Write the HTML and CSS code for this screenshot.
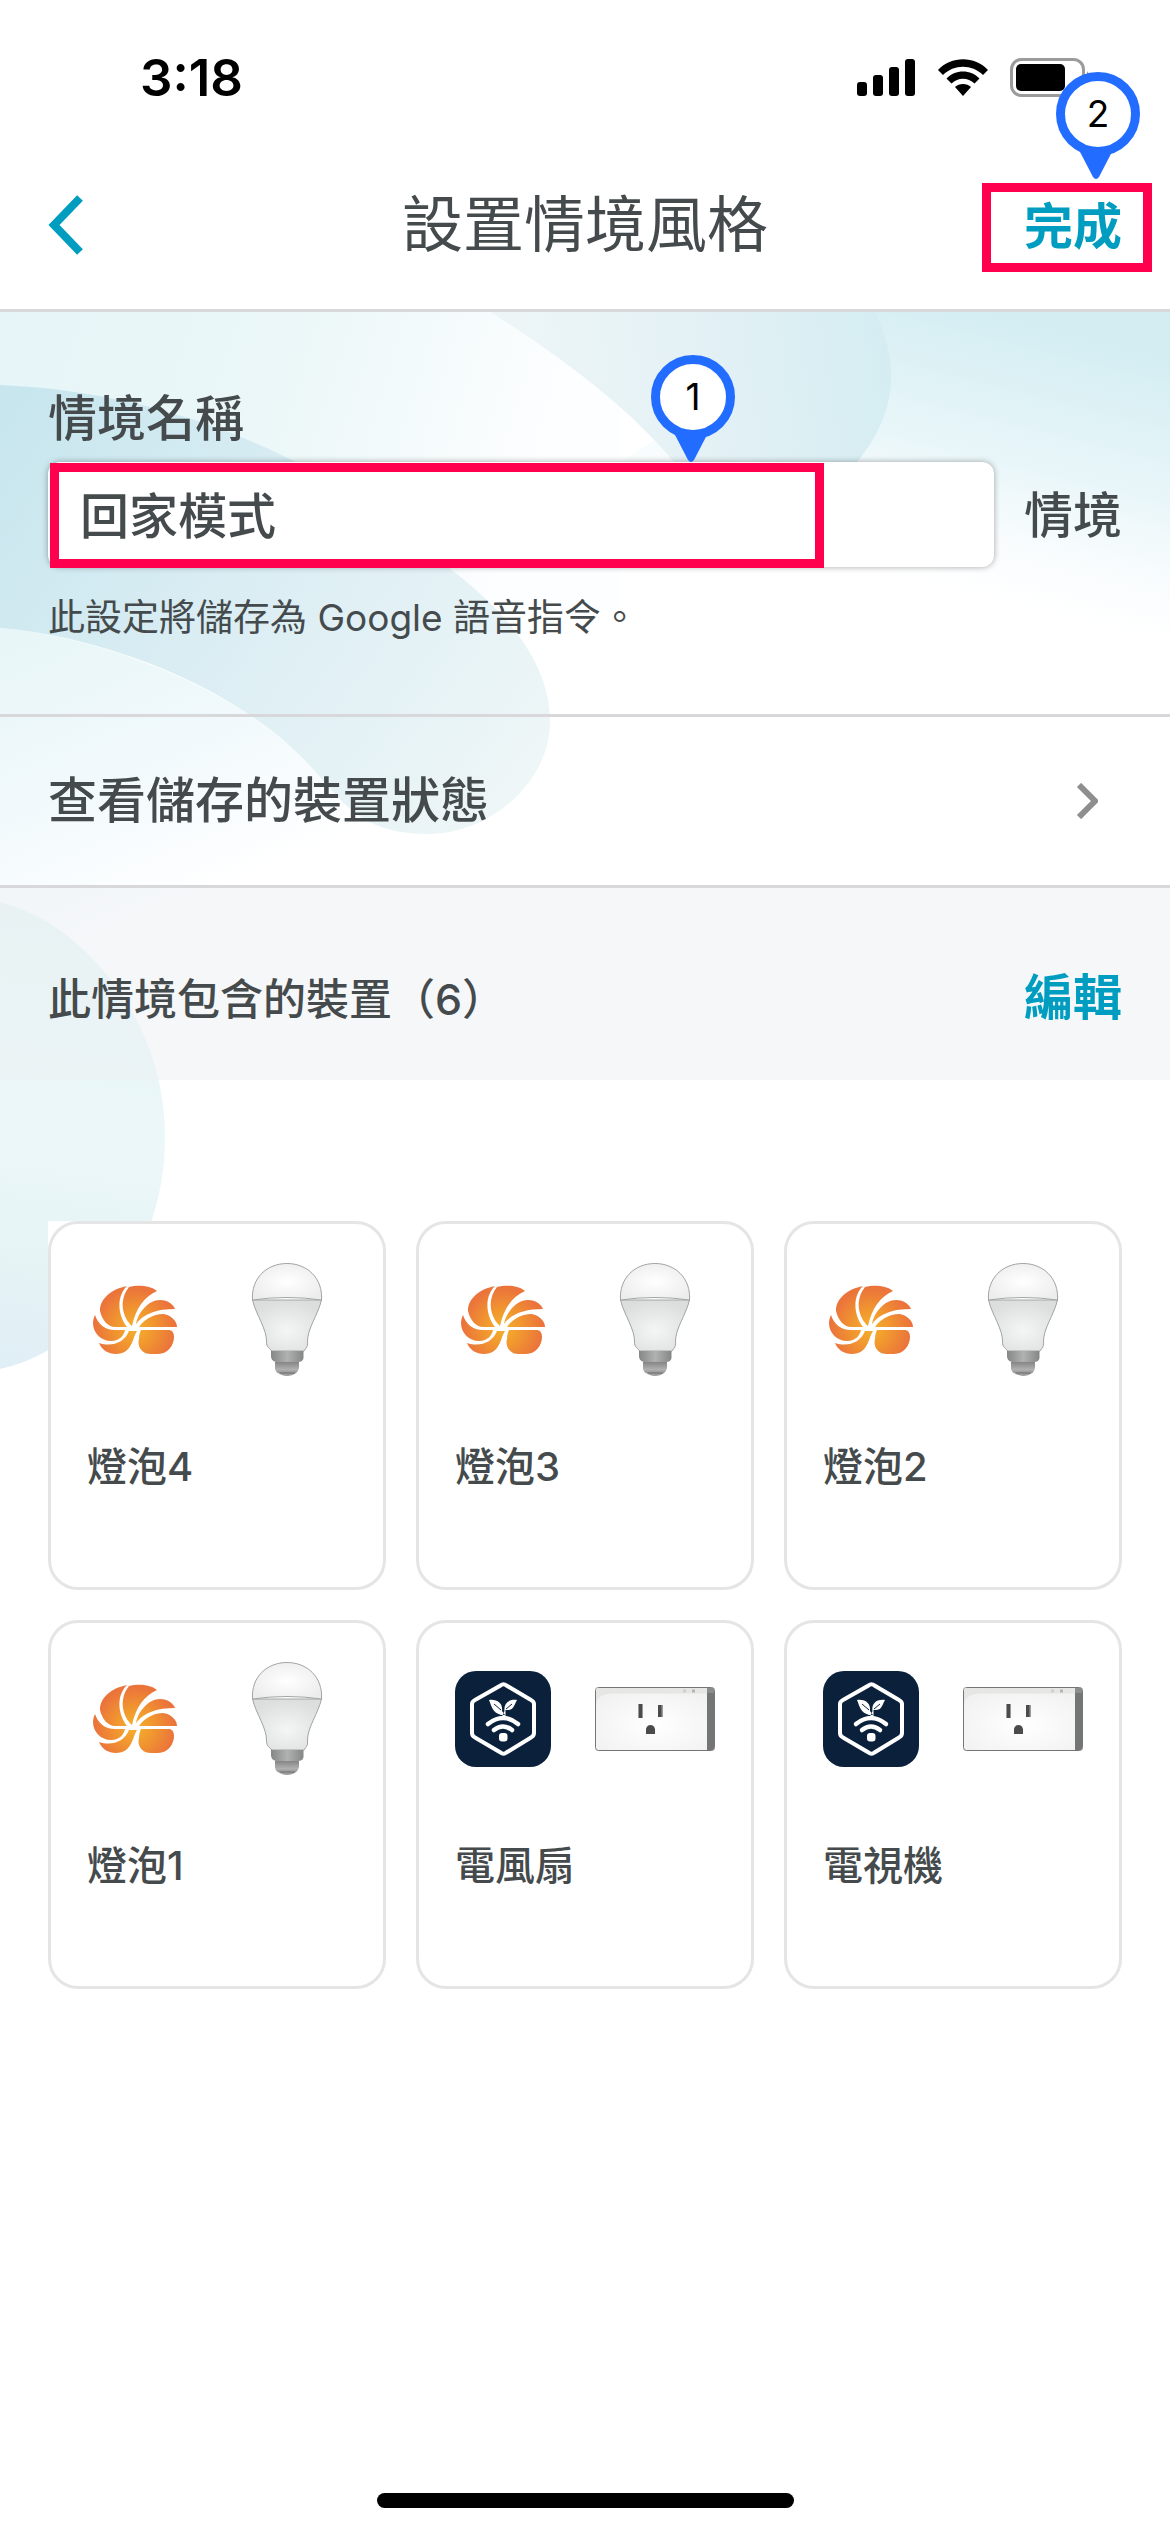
FILE: index.html
```html
<!DOCTYPE html>
<html lang="zh-Hant">
<head>
  <meta charset="UTF-8">
  <meta name="viewport" content="width=device-width, initial-scale=1.0">
  <title>設置情境風格</title>
  <link rel="stylesheet" href="styles.css">
</head>
<body>
  <!-- shared drawings -->
  <svg class="defs" aria-hidden="true">
    <defs>
      <radialGradient id="orange" gradientUnits="userSpaceOnUse" cx="48" cy="56" r="44">
        <stop offset="0" stop-color="#f6b02c"/>
        <stop offset="0.4" stop-color="#f1982f"/>
        <stop offset="0.9" stop-color="#eb743b"/>
      </radialGradient>
      <radialGradient id="dome" cx="0.5" cy="0.5" r="0.6">
        <stop offset="0" stop-color="#ffffff"/>
        <stop offset="1" stop-color="#ececec"/>
      </radialGradient>
      <radialGradient id="glass" cx="0.5" cy="0.6" r="0.6">
        <stop offset="0" stop-color="#f4f6f5"/>
        <stop offset="1" stop-color="#dcdddd"/>
      </radialGradient>
      <linearGradient id="metal">
        <stop offset="0" stop-color="#868686"/>
        <stop offset="0.5" stop-color="#b0b2b1"/>
        <stop offset="1" stop-color="#868686"/>
      </linearGradient>
      <linearGradient id="metal2" x2="0" y2="1">
        <stop offset="0" stop-color="#858585"/>
        <stop offset="0.6" stop-color="#b0b0b0"/>
        <stop offset="1" stop-color="#8c8c8c"/>
      </linearGradient>
      <radialGradient id="plate" cx="0.5" cy="0.6" r="0.6">
        <stop offset="0" stop-color="#ffffff"/>
        <stop offset="1" stop-color="#f2f2f2"/>
      </radialGradient>
    </defs>
    <symbol id="swirl" viewBox="0 0 96 96">
      <g fill="url(#orange)">
        <path d="M40 14C25 17 13 26 13 39C15 48 21 55 28 55H40C32 45 28 26 40 14Z"/>
        <path d="M42 15C50 13 63 13 70 19C57 25 49 36 45 54C36 46 31 29 42 15Z"/>
        <path d="M49 52C51 41 61 28 73 28C81 28 87 33 88 37C71 37 57 41 49 52Z"/>
        <path d="M52 55C58 46 68 42 76 42C84 43 90 49 90 55Z"/>
        <path d="M54 58H82C86 58 87 62 87 65C87 73 81 82 71 82H63C54 82 50 73 52 67C52 63 53 60 54 58Z"/>
        <path d="M8 43C11 52 18 58 28 58H38C37 63 33 69 24 69C14 69 6 61 6 51C6 48 7 45 8 43Z"/>
        <path d="M12 71C25 75 37 71 42 59H50C45 67 45 82 29 82C21 82 15 78 12 71Z"/>
      </g>
    </symbol>
    <symbol id="bulb" viewBox="0 0 120 120">
      <path d="M25.5 40C29 55 40 69 39.5 82C39.5 87 42 88 45 91H77C79 88 81 87 80.5 82C80 69 91 55 94.5 40Z" fill="url(#glass)" stroke="#a2a4a3"/>
      <path d="M25.5 40C24 18 40 3.5 60 3.5S96 18 94.5 40Q60 35 25.5 40Z" fill="url(#dome)" stroke="#a2a4a3"/>
      <path d="M44 91H76.5V98Q76 102 71 102H49Q44 101 44 96Z" fill="url(#metal)"/>
      <path d="M48 102H72V108Q71 113 66 114.5H54Q49 113 48 109Z" fill="url(#metal2)"/>
      <path d="M52 112.5H69Q65 116 60 116Q55 116 52 112.5Z" fill="#9b9e9c"/>
      <path d="M53 113H68" stroke="#6d706f"/>
    </symbol>
    <symbol id="sprout" viewBox="0 0 96 96">
      <rect width="96" height="96" rx="21" fill="#0b203b"/>
      <path d="M45.5 14.5Q48.5 12 51.5 14.5L76 29Q79 30.5 79 33V62Q79 65 76 66.5L51.5 81.5Q48.5 84 45.5 81.5L20 66.5Q17 65 17 62V33Q17 30.5 20 29Z" fill="none" stroke="#fff" stroke-width="4"/>
      <path d="M34 29C43 28 48 33 47 40L50 44H46C37 41 37 36 34 29ZM62 29C53 28 48.5 33 49.5 40L47 46H50.5V39C59 40 59 34 62 29Z" fill="#fff"/>
      <path d="M39 33L46 39M57 33L51 38" stroke="#0b203b"/>
      <path d="M33 53Q48 41 63 53M39 59Q48 52 57 59" fill="none" stroke="#fff" stroke-width="4.5" stroke-linecap="round"/>
      <rect x="44" y="62" width="8.5" height="8.5" rx="3" fill="#fff"/>
    </symbol>
    <symbol id="plug" viewBox="0 0 120 120">
      <rect x="0.5" y="28.5" width="119" height="63" rx="3" fill="url(#plate)" stroke="#747676"/>
      <path d="M1 46V31Q1 29 3 29H112V34.5H20Q2 34 1 46Z" fill="#e6e6e5"/>
      <path d="M112 29H117Q119 29 119 32V89Q119 91 117 91H112Z" fill="#747676"/>
      <path d="M112 29H117Q119 29 119 34H112Z" fill="#8b8d8d"/>
      <path d="M88 30.5H91V33.5H88Z" fill="#cfcfcf"/>
      <path d="M97 30.5H100V33.5H97Z" fill="#b5b5b5"/>
      <path d="M43 45H48V59H43ZM63 46H68V58H63Z" fill="#9a9a9a"/>
      <path d="M44 45H47V59H44ZM63 46H66.5V58H63ZM51 75V70Q52 66 55.5 66T60 70V75Z" fill="#4b4b4b"/>
    </symbol>
  </svg>

  <div class="page">
    <header class="header">
      <div class="status">
        <span class="time">3:18</span>
        <div class="status-icons">
          <svg width="60" height="40" viewBox="0 0 60 40">
            <rect x="1" y="24" width="10" height="14" rx="3"/>
            <rect x="17" y="17" width="10" height="21" rx="3"/>
            <rect x="33" y="9" width="10" height="29" rx="3"/>
            <rect x="49" y="1" width="10" height="37" rx="3"/>
          </svg>
          <svg width="52" height="40" viewBox="0 0 52 40">
            <path d="M1 12C14 -2.5 38 -2.5 51 12L46 17C35 6 17 6 6 17ZM9.5 20.5C18 11 34 11 42.5 20.5L37.5 25.5C31 19 21 19 14.5 25.5ZM18 29C22 25 30 25 34 29L26 38Z"/>
          </svg>
          <svg width="80" height="40" viewBox="0 0 80 40">
            <rect x="1.5" y="1.5" width="72" height="36" rx="10" fill="none" stroke="#9b9b9b" stroke-width="3"/>
            <rect x="6" y="6" width="49" height="27" rx="5"/>
            <path d="M77 13Q80 16 80 20T77 27Z" fill="#9b9b9b"/>
          </svg>
        </div>
      </div>
      <nav class="navbar">
        <button class="back" aria-label="返回">
          <svg width="36" height="60" viewBox="0 0 36 60"><path d="M32 3L6 30L32 57" fill="none" stroke="#009dc0" stroke-width="8"/></svg>
        </button>
        <h1 class="title">設置情境風格</h1>
        <div class="done-box">
          <button class="link-btn">完成</button>
          <div class="marker marker-done"></div>
          <div class="pin pin-done">
            <svg width="84" height="108" viewBox="0 0 84 108"><path d="M22 76L37 105Q40 109 43 105L58 76Z" fill="#226dff"/><circle cx="42" cy="42" r="37.5" fill="#fff" stroke="#226dff" stroke-width="9"/></svg>
            <span>2</span>
          </div>
        </div>
      </nav>
    </header>

    <main class="content">
      <svg class="backdrop" viewBox="0 0 1170 1080" preserveAspectRatio="none" aria-hidden="true">
        <defs>
          <linearGradient id="bgLeft" gradientUnits="userSpaceOnUse" x1="0" y1="0" x2="540" y2="170">
            <stop offset="0" stop-color="#e6f5f8"/>
            <stop offset="0.5" stop-color="#ebf7f8"/>
            <stop offset="1" stop-color="#fdfeff"/>
          </linearGradient>
          <linearGradient id="bgRight" gradientUnits="userSpaceOnUse" x1="1080" y1="20" x2="1010" y2="300">
            <stop offset="0" stop-color="#d3edf2"/>
            <stop offset="0.5" stop-color="#e9f6f9"/>
            <stop offset="1" stop-color="#f6fbfd" stop-opacity="0"/>
          </linearGradient>
          <linearGradient id="bgTop" gradientUnits="userSpaceOnUse" x1="500" y1="80" x2="880" y2="20">
            <stop offset="0" stop-color="#eef6f7"/>
            <stop offset="0.5" stop-color="#e4f1f5"/>
            <stop offset="1" stop-color="#d5edf2"/>
          </linearGradient>
          <linearGradient id="bgWave" gradientUnits="userSpaceOnUse" x1="0" y1="120" x2="500" y2="500">
            <stop offset="0" stop-color="#c8e6ee"/>
            <stop offset="0.5" stop-color="#dceef4"/>
            <stop offset="1" stop-color="#eef6f7"/>
          </linearGradient>
          <linearGradient id="bgLow" gradientUnits="userSpaceOnUse" x1="0" y1="330" x2="120" y2="620">
            <stop offset="0" stop-color="#e8f6f7"/>
            <stop offset="0.5" stop-color="#f1f9fc"/>
            <stop offset="1" stop-color="#ffffff"/>
          </linearGradient>
          <linearGradient id="bgDisc" gradientUnits="userSpaceOnUse" x1="100" y1="590" x2="30" y2="1057">
            <stop offset="0" stop-color="#e4f5f3"/>
            <stop offset="0.5" stop-color="#ecf7f9"/>
            <stop offset="0.75" stop-color="#e6f4f5"/>
            <stop offset="1" stop-color="#e0eef6"/>
          </linearGradient>
        </defs>
        <path d="M0 0H620V300H0Z" fill="url(#bgLeft)"/>
        <path d="M860 0H1170V320H620V150Z" fill="url(#bgRight)"/>
        <path d="M490 0C570 50 640 105 682 160L720 230C800 225 840 180 857 150C890 110 905 60 875 0Z" fill="url(#bgTop)"/>
        <path d="M0 316C110 325 260 385 330 475L430 640H0Z" fill="url(#bgLow)"/>
        <path d="M0 73C180 80 340 155 448 255C520 310 550 360 550 410C550 470 490 522 429 522C370 522 350 500 320 465C250 380 110 325 0 316Z" fill="url(#bgWave)"/>
        <path d="M0 590C80 610 165 705 165 825C165 950 80 1040 0 1057Z" fill="url(#bgDisc)"/>
      </svg>

      <section class="name-section">
        <label class="label" for="scene-name">情境名稱</label>
        <div class="field">
          <div class="input-box">
            <input class="input" id="scene-name" type="text" value="回家模式">
            <div class="marker marker-input"></div>
            <div class="pin pin-input">
              <svg width="84" height="108" viewBox="0 0 84 108"><path d="M22 76L37 105Q40 109 43 105L58 76Z" fill="#226dff"/><circle cx="42" cy="42" r="37.5" fill="#fff" stroke="#226dff" stroke-width="9"/></svg>
              <span>1</span>
            </div>
          </div>
          <span class="label">情境</span>
        </div>
        <p class="hint">此設定將儲存為 Google 語音指令。</p>
      </section>

      <button class="status-row">
        <span>查看儲存的裝置狀態</span>
        <svg width="24" height="36" viewBox="0 0 24 36"><path d="M5 2L21 18L5 34" fill="none" stroke="#8e8e8e" stroke-width="6"/></svg>
      </button>

      <section class="group">
        <h2 class="group-title">此情境包含的裝置（6）</h2>
        <button class="link-btn">編輯</button>
      </section>

      <ul class="devices">
        <li><div class="card">
          <div class="icons"><svg class="brand"><use href="#swirl"/></svg><svg class="device"><use href="#bulb"/></svg></div>
          <p class="name">燈泡4</p>
        </div></li>
        <li><div class="card">
          <div class="icons"><svg class="brand"><use href="#swirl"/></svg><svg class="device"><use href="#bulb"/></svg></div>
          <p class="name">燈泡3</p>
        </div></li>
        <li><div class="card">
          <div class="icons"><svg class="brand"><use href="#swirl"/></svg><svg class="device"><use href="#bulb"/></svg></div>
          <p class="name">燈泡2</p>
        </div></li>
        <li><div class="card">
          <div class="icons"><svg class="brand"><use href="#swirl"/></svg><svg class="device"><use href="#bulb"/></svg></div>
          <p class="name">燈泡1</p>
        </div></li>
        <li><div class="card">
          <div class="icons"><svg class="brand"><use href="#sprout"/></svg><svg class="device"><use href="#plug"/></svg></div>
          <p class="name">電風扇</p>
        </div></li>
        <li><div class="card">
          <div class="icons"><svg class="brand"><use href="#sprout"/></svg><svg class="device"><use href="#plug"/></svg></div>
          <p class="name">電視機</p>
        </div></li>
      </ul>
    </main>

    <footer class="footer"><div class="home-bar"></div></footer>
  </div>
</body>
</html>
```

FILE: styles.css
```css
*{
  padding: 0;
  margin: 0;
  box-sizing: border-box;
}
:root{
  --text: #454b4d;
  --accent: #009dc0;
  --line: #d8d7d9;
  --red: #ff004e;
  --side: 48px;
}
body{
  font-family: Inter, "Noto Sans CJK TC", sans-serif;
  color: var(--text);
  background-color: #fff;
}
button{
  border: none;
  background: none;
  font: inherit;
  color: inherit;
  cursor: pointer;
}
svg{
  display: block;
}
.defs{
  position: absolute;
  width: 0;
  height: 0;
}
.page{
  display: flex;
  flex-direction: column;
  min-height: 100vh;
}

/* header */
.header{
  border-bottom: 3px solid var(--line);
}
.status{
  display: flex;
  justify-content: space-between;
  align-items: center;
  height: 156px;
  padding: 0 80px 0 140px;
}
.time{
  font-size: 51px;
  font-weight: 600;
  line-height: 60px;
  color: #000;
}
.status-icons{
  display: flex;
  gap: 21px;
}
.navbar{
  display: grid;
  grid-template-columns: 1fr auto 1fr;
  align-items: center;
  height: 153px;
  padding: 0 var(--side) 16px;
}
.back{
  justify-self: start;
}
.title{
  font-size: 61px;
  font-weight: 400;
  line-height: 76px;
}
.link-btn{
  padding-top: 4px;
  font-size: 49px;
  font-weight: 700;
  line-height: 72px;
  color: var(--accent);
}
.done-box{
  position: relative;
  justify-self: end;
}

/* red frames and numbered pins */
.marker{
  position: absolute;
  border: 9px solid var(--red);
  pointer-events: none;
}
.marker-done{
  top: -4px;
  right: -30px;
  width: 170px;
  height: 89px;
}
.marker-input{
  top: 1px;
  left: 2px;
  right: 170px;
  bottom: -1px;
}
.pin{
  position: absolute;
  width: 84px;
  pointer-events: none;
}
.pin span{
  position: absolute;
  top: 0;
  left: 0;
  width: 84px;
  font-size: 37px;
  line-height: 84px;
  text-align: center;
  color: #000;
}
.pin-done{
  bottom: 83px;
  right: -18px;
}
.pin-input{
  bottom: 104px;
  right: 259px;
}

/* content */
.content{
  position: relative;
  flex: 1;
}
.backdrop{
  position: absolute;
  z-index: -1;
  top: 0;
  left: 0;
  width: 100%;
  height: 1080px;
}
.name-section{
  padding: 68px var(--side) 0;
  height: 405px;
  border-bottom: 3px solid var(--line);
}
.label{
  display: block;
  padding-top: 3px;
  font-size: 49px;
  font-weight: 500;
  line-height: 72px;
}
.field{
  display: flex;
  align-items: center;
  gap: 30px;
  margin-top: 7px;
}
.input-box{
  position: relative;
  flex: 1;
}
.input{
  display: block;
  width: 100%;
  height: 105px;
  padding: 0 32px 4px;
  border: none;
  border-radius: 12px;
  background-color: #fff;
  box-shadow: 0 0 6px rgba(0,0,0,0.35);
  font: inherit;
  font-size: 49px;
  font-weight: 500;
  color: var(--text);
}
.hint{
  margin-top: 24px;
  font-size: 37px;
  font-weight: 400;
  line-height: 54px;
}
.status-row{
  display: flex;
  justify-content: space-between;
  align-items: center;
  width: 100%;
  height: 171px;
  padding: 0 72px 0 var(--side);
  border-bottom: 3px solid var(--line);
  font-size: 49px;
  font-weight: 500;
  line-height: 72px;
}
.group{
  display: flex;
  justify-content: space-between;
  align-items: center;
  height: 192px;
  padding: 23px var(--side) 0;
  background-color: rgba(236,239,243,0.5);
}
.group-title{
  font-size: 43px;
  font-weight: 500;
}

/* device cards */
.devices{
  display: grid;
  grid-template-columns: repeat(3,1fr);
  gap: 30px;
  padding: 141px var(--side);
  list-style: none;
}
.devices li{
  background-color: #fff;
}
.card{
  height: 369px;
  padding: 36px;
  border: 3px solid #e5e5e5;
  border-radius: 30px;
}
.icons{
  display: flex;
  justify-content: space-between;
  align-items: center;
}
.brand{
  width: 96px;
  height: 96px;
}
.device{
  width: 120px;
  height: 120px;
}
.name{
  margin-top: 60px;
  font-size: 40px;
  font-weight: 500;
  line-height: 54px;
}

/* home indicator */
.footer{
  display: flex;
  justify-content: center;
  padding-bottom: 24px;
}
.home-bar{
  width: 417px;
  height: 15px;
  border-radius: 8px;
  background-color: #000;
}
```
